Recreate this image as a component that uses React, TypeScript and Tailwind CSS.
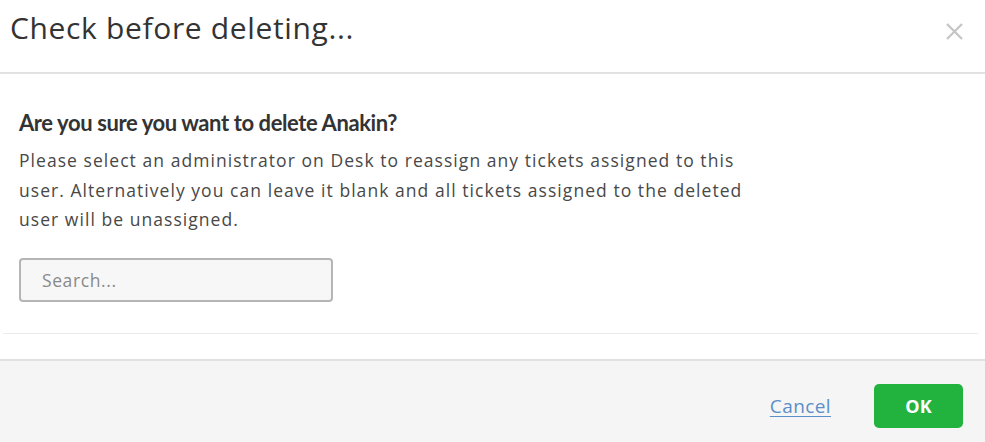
export default function App() {
  return (
    <div className="w-[985px] h-[442px] bg-white flex flex-col font-['Open_Sans','Liberation_Sans',sans-serif] text-[#333]">
      {/* Header */}
      <div className="h-[74px] shrink-0 flex items-start justify-between border-b-2 border-[#e2e2e2] pl-[10px] pr-[21px]">
        <h1 className="mt-[8px] text-[30px] leading-[40px] tracking-[0.65px] text-[#333]">Check before deleting...</h1>
        <button className="mt-[22px] text-[#c4c4c4]" aria-label="Close">
          <svg width="19" height="19" viewBox="0 0 19 19" fill="none" stroke="currentColor" strokeWidth="2.2">
            <path d="M2 2L17 17M17 2L2 17" />
          </svg>
        </button>
      </div>

      {/* Body */}
      <div className="h-[285px] shrink-0 flex flex-col">
        <div className="px-[19px] pt-[34px] flex-1">
          <h2 className="font-['Lato','Open_Sans',sans-serif] text-[22px] leading-[30px] font-bold tracking-[-0.4px] text-[#333]">
            Are you sure you want to delete Anakin?
          </h2>
          <p className="mt-[8px] text-[17.5px] leading-[29.5px] tracking-[1.05px] text-[#484848]">
            Please select an administrator on Desk to reassign any tickets assigned to this
            <br />
            user. Alternatively you can leave it blank and all tickets assigned to the deleted
            <br />
            user will be unassigned.
          </p>
          <input
            type="text"
            placeholder="Search..."
            className="mt-[23px] w-[314px] h-[44px] rounded-[4px] border-2 border-[#b5b5b5] bg-[#f7f7f7] pl-[21px] text-[17.5px] tracking-[0.6px] text-[#333] placeholder:text-[#8a8a8a] outline-none"
          />
        </div>
        <div className="ml-[3px] mr-[7px] mb-[25px] border-t border-[#ececec]" />
      </div>

      {/* Footer */}
      <div className="flex-1 border-t-2 border-[#e0e0e0] bg-[#f5f5f5] flex items-center justify-end gap-[43px] pr-[22px] pt-[9px]">
        <a href="#" className="text-[19px] tracking-[0.4px] text-[#5b8fc9] underline underline-offset-[3px]">Cancel</a>
        <button className="w-[89px] h-[44px] rounded-[5px] bg-[#22b33f] text-white text-[18px] font-bold">OK</button>
      </div>
    </div>
  );
}
